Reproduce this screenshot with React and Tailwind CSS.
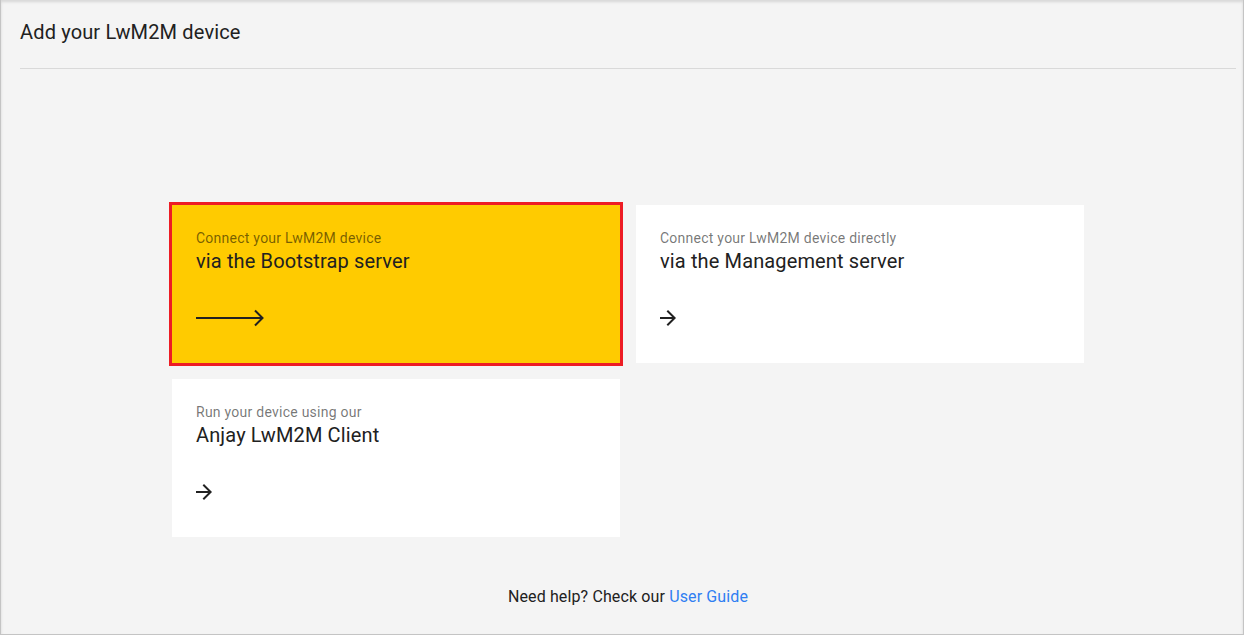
import React from 'react';

function ArrowShort() {
  return (
    <svg className="w-6 h-6 -ml-1 text-[#212121]" viewBox="0 0 24 24" fill="currentColor">
      <path d="M12 4l-1.41 1.41L16.17 11H4v2h12.17l-5.58 5.59L12 20l8-8z" />
    </svg>
  );
}

function ArrowLong() {
  return (
    <svg className="w-[72px] h-6 text-[#212121]" viewBox="0 0 72 24" fill="none" stroke="currentColor" strokeWidth={2}>
      <path d="M0 12H66" />
      <path d="M59 4.5L66.5 12L59 19.5" />
    </svg>
  );
}

function Card({ subtitle, title, active }) {
  return (
    <div
      className={
        active
          ? 'h-[158px] bg-[#ffcb00] outline-[3px] outline-solid outline-[#ed1c24] px-6 pt-[24px] cursor-pointer'
          : 'h-[158px] bg-white px-6 pt-[24px] cursor-pointer'
      }
    >
      <p className="text-[14px] leading-[18px] tracking-[0.25px] text-black/55">{subtitle}</p>
      <p className="mt-[2px] text-[20px] leading-[24px] tracking-[0.13px] text-[#212121]">{title}</p>
      <div className="mt-[33px] h-6 flex items-center">
        {active ? <ArrowLong /> : <ArrowShort />}
      </div>
    </div>
  );
}

export default function App() {
  return (
    <div
      className="h-[635px] w-full flex flex-col bg-[#f4f4f4] border border-[#c4c4c4] border-t-0 shadow-[inset_0_2px_3px_rgba(0,0,0,0.12)]"
      style={{ fontFamily: 'Roboto, "Liberation Sans", sans-serif' }}
    >
      {/* Header */}
      <header className="pl-[19px] pr-[7px]">
        <h1 className="pt-[20px] pb-[24px] text-[20px] leading-6 tracking-[0.15px] text-[#212121]">Add your LwM2M device</h1>
        <div className="h-px bg-[#d9d9d9]" />
      </header>

      {/* Options */}
      <main className="flex flex-col items-center pl-[12px] pt-[136px]">
        <div className="grid grid-cols-[448px_448px] gap-4">
          <Card active subtitle="Connect your LwM2M device" title="via the Bootstrap server" />
          <Card subtitle="Connect your LwM2M device directly" title="via the Management server" />
          <Card subtitle="Run your device using our" title="Anjay LwM2M Client" />
        </div>
        <p className="mt-[50px] text-[16px] leading-5 tracking-[0.13px] text-[#212121]">
          Need help? Check our <a href="#" className="text-[#2f7ef2]">User Guide</a>
        </p>
      </main>
    </div>
  );
}
